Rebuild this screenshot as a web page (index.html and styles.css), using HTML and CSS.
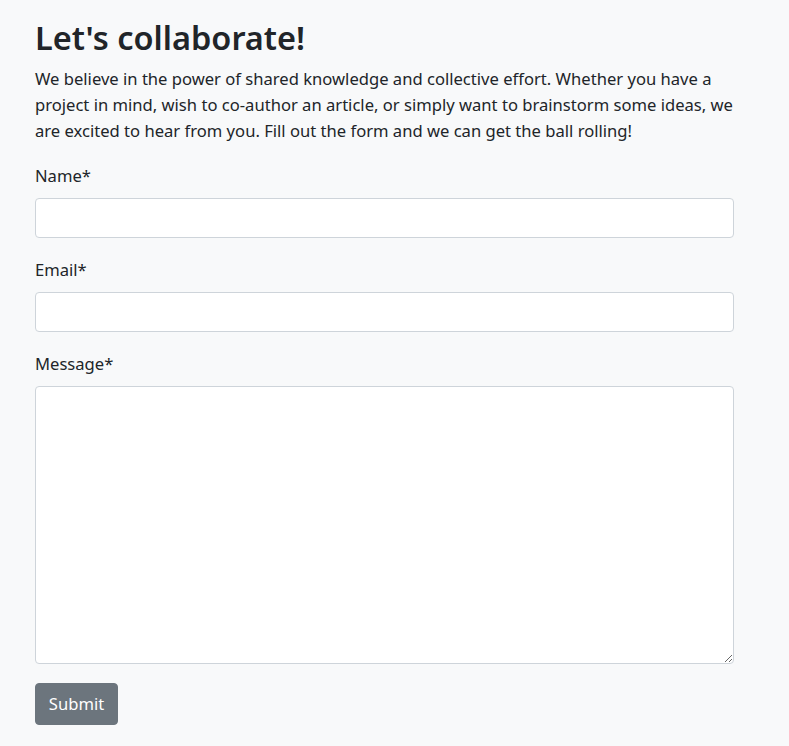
FILE: index.html
```html
<!DOCTYPE html>
<html lang="en">
<head>
<meta charset="utf-8">
<title>Let's collaborate!</title>
<link rel="stylesheet" href="styles.css">
</head>
<body>
<main class="container">
  <h1 class="title">Let's collaborate!</h1>
  <p class="lead-text">We believe in the power of shared knowledge and collective effort. Whether you have a project in mind, wish to co-author an article, or simply want to brainstorm some ideas, we are excited to hear from you. Fill out the form and we can get the ball rolling!</p>
  <form class="form">
    <div class="field">
      <label class="label" for="name">Name*</label>
      <input class="control" id="name" type="text">
    </div>
    <div class="field">
      <label class="label" for="email">Email*</label>
      <input class="control" id="email" type="email">
    </div>
    <div class="field field-last">
      <label class="label" for="message">Message*</label>
      <textarea class="control textarea" id="message"></textarea>
    </div>
    <button class="btn" type="button">Submit</button>
  </form>
</main>
</body>
</html>
```

FILE: styles.css
```css
* { box-sizing: border-box; }
html, body { margin: 0; padding: 0; }
body {
  background: #f8f9fa;
  color: #212529;
  font-family: "Noto Sans", "Open Sans", sans-serif;
  font-size: 16.6px;
  line-height: 24px;
}
.container {
  width: 699px;
  margin-left: 35px;
  padding-top: 18px;
  padding-bottom: 20px;
}
.title {
  margin: 0 0 9px;
  font-size: 32.5px;
  font-weight: 600;
  line-height: 39px;
}
.lead-text {
  margin: 0 0 20px;
  line-height: 26px;
}
.field {
  margin-bottom: 20px;
}
.field-last {
  margin-bottom: 19px;
}
.label {
  display: block;
  margin-bottom: 10px;
}
.control {
  display: block;
  width: 100%;
  height: 40px;
  padding: 6px 12px;
  font: inherit;
  color: #212529;
  background: #fff;
  border: 1px solid #ced4da;
  border-radius: 4px;
}
.textarea {
  height: 278px;
  resize: vertical;
}
.btn {
  display: block;
  font: inherit;
  font-size: 16.6px;
  color: #fff;
  background: #6c757d;
  border: 1px solid #6c757d;
  border-radius: 4px;
  height: 42px;
  width: 83px;
  padding: 0;
}
```
